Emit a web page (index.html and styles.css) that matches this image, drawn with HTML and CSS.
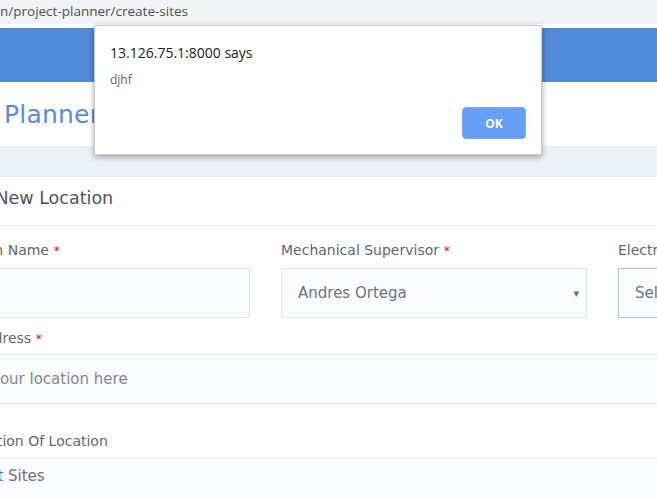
FILE: index.html
```html
<!DOCTYPE html>
<html lang="en">
<head>
<meta charset="utf-8">
<title>Create Sites</title>
<link rel="stylesheet" href="styles.css">
</head>
<body>
<div class="urlbar"><span class="url">n/project-planner/create-sites</span></div>
<div class="viewport">
  <div class="app">
    <header class="topbar"></header>
    <div class="titlebar"><h1 class="app-title">Project Planner</h1></div>
    <div class="crumbbar"></div>
    <section class="card">
      <div class="card-head"><h2 class="card-title">Add New Location</h2></div>
      <div class="card-body">
        <div class="row3">
          <div class="field">
            <label class="label">Location Name <span class="req">*</span></label>
            <div class="control"></div>
          </div>
          <div class="field">
            <label class="label">Mechanical Supervisor <span class="req">*</span></label>
            <div class="control select"><span class="value">Andres Ortega</span><span class="caret">&#9662;</span></div>
          </div>
          <div class="field">
            <label class="label">Electrical Supervisor <span class="req">*</span></label>
            <div class="control select focus"><span class="value">Select Supervisor</span></div>
          </div>
        </div>
        <div class="field wide">
          <label class="label">Site Address <span class="req">*</span></label>
          <div class="control full"><span class="placeholder">Enter your location here</span></div>
        </div>
        <div class="field wide second">
          <label class="label">Description Of Location</label>
          <div class="control full area"><span class="value shifted">Select Sites</span></div>
        </div>
      </div>
    </section>
  </div>
</div>
<div class="dialog" role="alertdialog">
  <div class="dialog-title">13.126.75.1:8000 says</div>
  <div class="dialog-msg">djhf</div>
  <div class="dialog-actions"><button class="btn-ok">OK</button></div>
</div>
</body>
</html>
```

FILE: styles.css
```css
html, body {
  margin: 0;
  padding: 0;
  background: #ffffff;
  overflow: hidden;
  width: 657px;
  height: 498px;
}

.urlbar {
  height: 24px;
  background: #f1f3f4;
  margin-bottom: 4px;
  display: flex;
  align-items: center;
  overflow: hidden;
}

.url {
  font-family: "Segoe UI", "Open Sans", sans-serif;
  font-size: 13.5px;
  color: #4c5054;
  white-space: nowrap;
  margin-top: -3px;
}

.viewport {
  overflow: hidden;
  width: 657px;
}

.app {
  font-family: "DejaVu Sans", sans-serif;
  width: 900px;
}

.topbar {
  height: 54px;
  background: #518ad9;
}

.titlebar {
  height: 64px;
  display: flex;
  align-items: center;
  margin-left: -91px;
}

.app-title {
  margin: 0;
  font-weight: normal;
  font-size: 25px;
  color: #5a8bdb;
  white-space: nowrap;
  letter-spacing: 0.2px;
}

.crumbbar {
  height: 30px;
  background: #edf2f6;
  border-bottom: 1px solid #e3e8ee;
}

.card-head {
  height: 48px;
  border-bottom: 1px solid #e6eaef;
  display: flex;
  align-items: center;
  margin-left: -44px;
}

.card-title {
  margin: 0 0 6px 0;
  font-weight: normal;
  font-size: 17.5px;
  color: #4b5561;
  white-space: nowrap;
}

.card-body {
  margin-left: -56px;
  padding-top: 15px;
}

.row3 {
  display: grid;
  grid-template-columns: 306px 306px 306px;
  column-gap: 31px;
}

.field {
  display: flex;
  flex-direction: column;
  gap: 8px;
}

.field.wide {
  margin-top: 11px;
  gap: 6px;
}

.field.wide.second {
  margin-top: 28px;
  gap: 7px;
}

.label {
  font-size: 14px;
  color: #5f6770;
  white-space: nowrap;
  line-height: 18px;
}

.req {
  color: #b8323a;
  font-size: 13px;
}

.control {
  box-sizing: border-box;
  height: 50px;
  background: #fafbfd;
  border: 1px solid #dfe5ec;
  display: flex;
  align-items: center;
  padding: 0 16px;
  font-size: 15px;
  color: #6c747e;
  white-space: nowrap;
}

.control.focus {
  border-color: #b7c4cd;
}

.control.full {
  width: 1000px;
  border-left: 0;
  border-right: 0;
  padding-left: 17px;
}

.control.area {
  align-items: flex-start;
  padding-top: 9px;
}

.shifted {
  margin-left: -4px;
}

.select {
  justify-content: space-between;
}

.caret {
  font-size: 11px;
  color: #666e76;
  margin-right: -9px;
}

.placeholder {
  color: #80878f;
  margin-left: -15px;
}

.dialog {
  position: absolute;
  left: 94px;
  top: 25px;
  width: 448px;
  height: 130px;
  box-sizing: border-box;
  background: #ffffff;
  border: 1px solid #c9c9c9;
  border-radius: 2px;
  box-shadow: 0 2px 6px rgba(0, 0, 0, 0.35);
  font-family: "Segoe UI", "Open Sans", sans-serif;
  padding: 17px 15px 0 15px;
  display: flex;
  flex-direction: column;
}

.dialog-title {
  font-size: 14px;
  color: #202124;
  line-height: 20px;
}

.dialog-msg {
  font-size: 12px;
  color: #5f6368;
  margin-top: 9px;
  line-height: 16px;
}

.dialog-actions {
  display: flex;
  justify-content: flex-end;
  margin-top: 19px;
}

.btn-ok {
  width: 64px;
  height: 32px;
  background: #669df6;
  border: 1px solid #7aabf7;
  border-radius: 4px;
  color: #ffffff;
  font-family: "Segoe UI", "Open Sans", sans-serif;
  font-weight: bold;
  font-size: 12px;
  padding: 0;
}
```
